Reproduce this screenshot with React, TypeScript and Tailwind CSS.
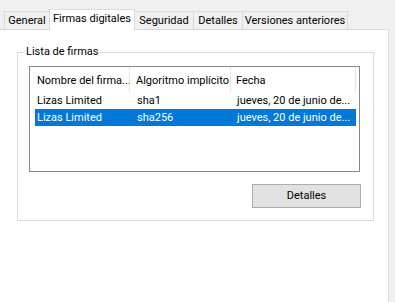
import React from "react";

const tabBase =
  "flex items-center justify-center border-t border-x border-[#d9d9d9] whitespace-nowrap";

export default function App() {
  return (
    <div className="w-[395px] h-[302px] bg-[#f0f0f0] overflow-hidden text-[11px] text-black font-['Roboto',sans-serif] leading-[14px] whitespace-nowrap">
      <div className="flex items-end h-[29px] pl-[4px]">
        <div className={`${tabBase} w-[46px] h-[18px] bg-[#f0f0f0]`}>General</div>
        <div className={`${tabBase} relative z-10 -ml-px w-[86px] h-[21px] -mb-px bg-white pb-[2px]`}>
          Firmas digitales
        </div>
        <div className={`${tabBase} -ml-px w-[60px] h-[18px] bg-[#f0f0f0]`}>Seguridad</div>
        <div className={`${tabBase} -ml-px w-[50px] h-[18px] bg-[#f0f0f0]`}>Detalles</div>
        <div className={`${tabBase} -ml-px w-[106px] h-[18px] bg-[#f0f0f0]`}>Versiones anteriores</div>
      </div>
      <div className="w-[389px] h-[273px] bg-white border-t border-r border-[#d9d9d9] pt-[22px] pl-[17px]">
        <div className="relative w-[357px] h-[169px] border border-[#dcdcdc]">
          <div className="absolute left-[6px] top-[-8px] px-[2px] bg-white">Lista de firmas</div>
          <div className="ml-[11px] mt-[13px] w-[331px] h-[106px] border border-[#828790] bg-white overflow-hidden">
            <div className="flex h-[25px]">
              <div className="w-[100px] shrink-0 h-full flex items-center pt-[3px] pl-[7px] border-r border-[#e5e5e5] overflow-hidden">
                Nombre del firma...
              </div>
              <div className="w-[101px] shrink-0 h-full flex items-center pt-[3px] pl-[6px] border-r border-[#e5e5e5] overflow-hidden">
                Algoritmo implícito
              </div>
              <div className="w-[125px] shrink-0 h-full flex items-center pt-[3px] pl-[5px] border-r border-[#e5e5e5]">
                Fecha
              </div>
            </div>
            <div className="ml-[5px] w-[321px]">
              <div className="flex h-[17px] items-center pl-[2px] pt-[1px]">
                <div className="w-[100px] shrink-0">Lizas Limited</div>
                <div className="w-[100px] shrink-0">sha1</div>
                <div>jueves, 20 de junio de...</div>
              </div>
              <div className="flex h-[17px] items-center pl-[2px] pt-[1px] bg-[#0078d7] text-white">
                <div className="w-[100px] shrink-0">Lizas Limited</div>
                <div className="w-[100px] shrink-0">sha256</div>
                <div>jueves, 20 de junio de...</div>
              </div>
            </div>
          </div>
          <div className="flex justify-end mt-[12px] pr-[12px]">
            <div className="w-[109px] h-[24px] flex items-center justify-center bg-[#e1e1e1] border border-[#adadad]">
              Detalles
            </div>
          </div>
        </div>
      </div>
    </div>
  );
}
